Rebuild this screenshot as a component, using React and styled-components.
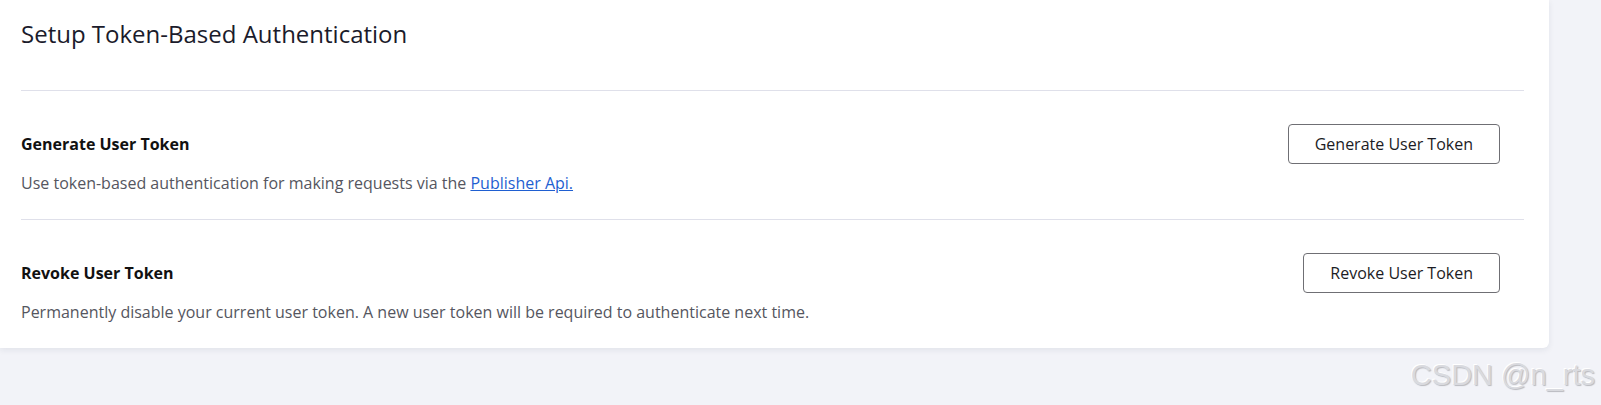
import React from "react";
import styled, { createGlobalStyle } from "styled-components";

const GlobalStyle = createGlobalStyle`
  html, body {
    margin: 0;
    padding: 0;
    background: #f2f3f8;
    font-family: "Open Sans", "Noto Sans", sans-serif;
  }
  #root {
    min-height: 405px;
    position: relative;
  }
`;

const Card = styled.div`
  width: 1549px;
  background: #ffffff;
  border-radius: 0 0 6px 0;
  box-shadow: 0 2px 6px rgba(30, 35, 70, 0.08);
  padding: 0 25px 0 21px;
  box-sizing: border-box;
`;

const Header = styled.div`
  padding: 18px 0 40px;
  border-bottom: 1px solid #dfe0ea;
`;

const Title = styled.h2`
  margin: 0;
  font-size: 24px;
  line-height: 32px;
  font-weight: 400;
  color: #1b1b2b;
`;

const Row = styled.div`
  display: flex;
  justify-content: space-between;
  align-items: flex-start;
  padding: 33px 24px 25px 0;
  border-bottom: ${(p) => (p.$last ? "none" : "1px solid #dfe0ea")};
`;

const Info = styled.div`
  padding-top: 9px;
`;

const RowTitle = styled.div`
  font-size: 16px;
  line-height: 22px;
  font-weight: 700;
  color: #111111;
`;

const RowText = styled.p`
  margin: 17px 0 0;
  font-size: 16px;
  line-height: 22px;
  color: #555660;
`;

const Link = styled.a`
  color: #1f5fd1;
  text-decoration: underline;
`;

const Button = styled.button`
  height: 40px;
  padding: 0 26px;
  background: #ffffff;
  border: 1px solid #6f6f74;
  border-radius: 4px;
  font-family: "Open Sans", "Noto Sans", sans-serif;
  font-size: 16px;
  color: #1c1c24;
  cursor: pointer;
`;

const Watermark = styled.div`
  position: absolute;
  right: 6px;
  top: 359px;
  font-family: "Liberation Sans", Arial, sans-serif;
  font-size: 29px;
  color: #d9dadf;
  text-shadow: 1px 1px 1px #b9babf, -1px -1px 0 #ffffff;
  pointer-events: none;
`;

export default function App() {
  return (
    <>
      <GlobalStyle />
      <Card>
        <Header>
          <Title>Setup Token-Based Authentication</Title>
        </Header>
        <Row>
          <Info>
            <RowTitle>Generate User Token</RowTitle>
            <RowText>
              Use token-based authentication for making requests via the{" "}
              <Link href="#">Publisher Api.</Link>
            </RowText>
          </Info>
          <Button>Generate User Token</Button>
        </Row>
        <Row $last>
          <Info>
            <RowTitle>Revoke User Token</RowTitle>
            <RowText>
              Permanently disable your current user token. A new user token will be required to authenticate next time.
            </RowText>
          </Info>
          <Button>Revoke User Token</Button>
        </Row>
      </Card>
      <Watermark>CSDN @n_rts</Watermark>
    </>
  );
}
